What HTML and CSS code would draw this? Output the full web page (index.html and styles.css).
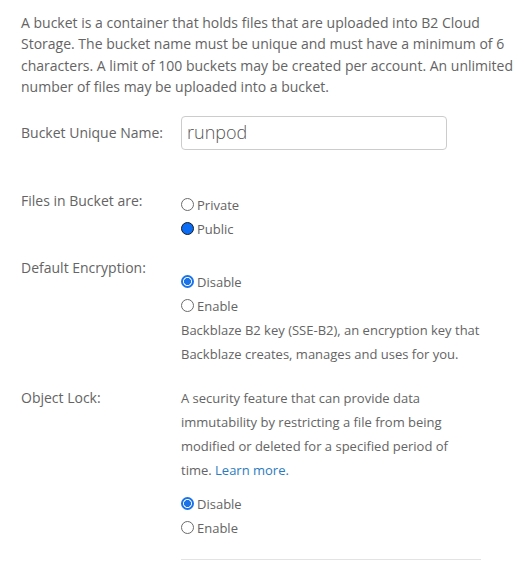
FILE: index.html
```html
<!DOCTYPE html>
<html>
<head>
<meta charset="utf-8">
<link rel="stylesheet" href="styles.css">
</head>
<body>
<div class="page">
  <p class="intro">A bucket is a container that holds files that are uploaded into B2 Cloud Storage. The bucket name must be unique and must have a minimum of 6 characters. A limit of 100 buckets may be created per account. An unlimited number of files may be uploaded into a bucket.</p>

  <div class="row row-name">
    <div class="label label-name">Bucket Unique Name:</div>
    <div class="input">runpod</div>
  </div>

  <div class="row row-files">
    <div class="label">Files in Bucket are:</div>
    <div class="options opt-files">
      <div class="opt"><span class="radio"></span>Private</div>
      <div class="opt"><span class="radio focused"></span>Public</div>
    </div>
  </div>

  <div class="row row-enc">
    <div class="label">Default Encryption:</div>
    <div class="options opt-enc">
      <div class="opt"><span class="radio checked"></span>Disable</div>
      <div class="opt"><span class="radio"></span>Enable</div>
      <p class="desc">Backblaze B2 key (SSE-B2), an encryption key that Backblaze creates, manages and uses for you.</p>
    </div>
  </div>

  <div class="row row-lock">
    <div class="label">Object Lock:</div>
    <div class="options">
      <p class="desc">A security feature that can provide data immutability by restricting a file from being modified or deleted for a specified period of time. <a class="link" href="#">Learn more.</a></p>
      <div class="lock-opts">
        <div class="opt"><span class="radio checked"></span>Disable</div>
        <div class="opt"><span class="radio"></span>Enable</div>
      </div>
      <div class="rule"></div>
    </div>
  </div>
</div>
</body>
</html>
```
FILE: styles.css
```css
html, body {
  margin: 0;
  padding: 0;
  background: #fff;
}
.page {
  font-family: "Open Sans", "Liberation Sans", sans-serif;
  color: #646464;
  padding: 12px 0 0 21px;
}
.intro {
  margin: 0;
  width: 495px;
  font-size: 14px;
  line-height: 21.3px;
}
.row {
  display: grid;
  grid-template-columns: 160px 300px;
}
.label {
  font-size: 14px;
  line-height: 24px;
}
.row-name {
  margin-top: 19px;
  align-items: center;
}
.input {
  box-sizing: border-box;
  width: 266px;
  height: 34px;
  border: 1px solid #cccccc;
  border-radius: 4px;
  padding-left: 5px;
  font-size: 18px;
  font-weight: 300;
  line-height: 30px;
  color: #555;
}
.row-files { margin-top: 39px; }
.row-enc { margin-top: 15px; }
.row-lock { margin-top: 20px; }
.opt-files { padding-top: 4px; }
.opt-enc { padding-top: 14px; }
.opt {
  display: flex;
  align-items: center;
  gap: 3px;
  font-size: 13px;
  line-height: 24px;
}
.radio {
  box-sizing: border-box;
  width: 13px;
  height: 13px;
  border-radius: 50%;
  border: 1px solid #6b6b6b;
  background: #fff;
  flex: none;
  margin-top: -2px;
}
.radio.checked {
  border: 2px solid #1a73e8;
  background: radial-gradient(circle, #1a73e8 0 3.2px, #fff 3.8px);
}
.radio.focused {
  border: 1.5px solid #1b1b1b;
  background: #0a6cf5;
}
.desc {
  margin: 0;
  font-size: 13px;
  line-height: 24px;
}
.link {
  color: #2b7bc0;
  text-decoration: none;
}
.lock-opts { margin-top: 10px; }
.rule {
  margin-top: 19px;
  width: 300px;
  height: 1px;
  background: #e3e3e3;
}
```
